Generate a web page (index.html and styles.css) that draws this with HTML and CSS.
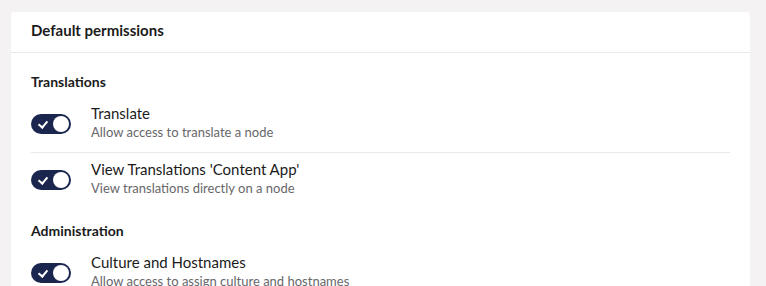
FILE: index.html
```html
<!DOCTYPE html>
<html lang="en">
<head>
  <meta charset="UTF-8" />
  <meta name="viewport" content="width=device-width, initial-scale=1.0" />
  <title>Default permissions</title>
  <link rel="stylesheet" href="styles.css">
</head>
<body>
  <div class="box">
    <div class="box-header">Default permissions</div>
    <div class="box-content">
      <div class="group">
        <h4 class="group-title">Translations</h4>
        <div class="perm">
          <span class="toggle on"><span class="check"></span><span class="knob"></span></span>
          <div class="perm-text">
            <div class="perm-name">Translate</div>
            <div class="perm-desc">Allow access to translate a node</div>
          </div>
        </div>
        <div class="perm">
          <span class="toggle on"><span class="check"></span><span class="knob"></span></span>
          <div class="perm-text">
            <div class="perm-name">View Translations 'Content App'</div>
            <div class="perm-desc">View translations directly on a node</div>
          </div>
        </div>
      </div>
      <div class="group">
        <h4 class="group-title">Administration</h4>
        <div class="perm">
          <span class="toggle on"><span class="check"></span><span class="knob"></span></span>
          <div class="perm-text">
            <div class="perm-name">Culture and Hostnames</div>
            <div class="perm-desc">Allow access to assign culture and hostnames</div>
          </div>
        </div>
      </div>
    </div>
  </div>
</body>
</html>
```

FILE: styles.css
```css
body {
  font-family: Lato, "Open Sans", sans-serif;
  margin: 0;
  padding: 12px 16px 0 11px;
  background-color: #f4f2f2;
  color: #1b1b1b;
}
.box {
  background-color: #fff;
  border-radius: 3px;
  box-shadow: 0 1px 1px rgba(0, 0, 0, 0.05);
}
.box-header {
  font-size: 15px;
  font-weight: bold;
  padding: 9px 20px 13px;
  border-bottom: 1px solid #e9e9eb;
}
.box-content {
  padding: 20px 20px 20px;
}
.group {
  margin-bottom: 14px;
}
.group-title {
  font-size: 14px;
  font-weight: bold;
  margin: 0 0 9px;
}
.perm {
  display: flex;
  align-items: center;
  padding: 4px 0 11px;
}
.perm + .perm {
  border-top: 1px solid #e9e9eb;
  padding-top: 6px;
}
.toggle {
  position: relative;
  display: inline-block;
  width: 40px;
  height: 20px;
  border-radius: 10px;
  background-color: #1b264f;
  flex-shrink: 0;
  margin-right: 20px;
  margin-top: 3px;
}
.toggle .knob {
  position: absolute;
  right: 2px;
  top: 2px;
  width: 16px;
  height: 16px;
  border-radius: 50%;
  background-color: #fff;
}
.toggle .check {
  position: absolute;
  left: 9px;
  top: 5px;
  width: 4px;
  height: 7px;
  border-right: 2px solid #fff;
  border-bottom: 2px solid #fff;
  transform: rotate(40deg);
}
.perm-name {
  font-size: 15px;
  line-height: 20px;
}
.perm-desc {
  font-size: 13px;
  line-height: 18px;
  color: #68676b;
}
```
